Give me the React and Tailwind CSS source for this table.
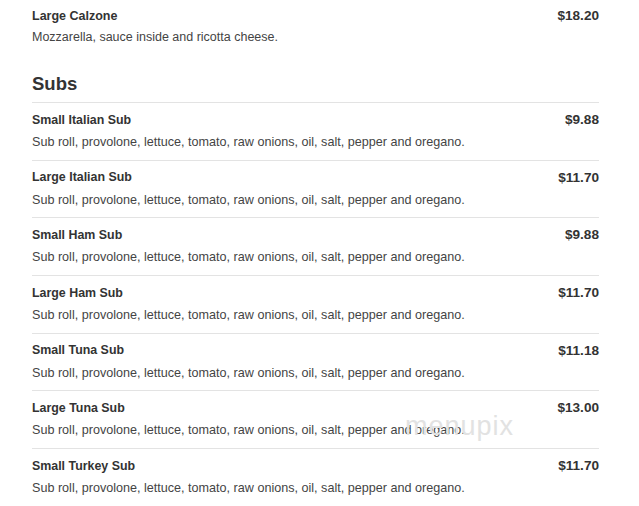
const SUB_DESC = "Sub roll, provolone, lettuce, tomato, raw onions, oil, salt, pepper and oregano.";

const subs = [
  { name: "Small Italian Sub", price: "$9.88" },
  { name: "Large Italian Sub", price: "$11.70" },
  { name: "Small Ham Sub", price: "$9.88" },
  { name: "Large Ham Sub", price: "$11.70" },
  { name: "Small Tuna Sub", price: "$11.18" },
  { name: "Large Tuna Sub", price: "$13.00" },
  { name: "Small Turkey Sub", price: "$11.70" },
];

function Item({ name, price, desc }) {
  return (
    <div className="border-t border-[#e3e3e3] pt-[7px] pb-[7.7px]">
      <div className="flex items-center justify-between h-[20px]">
        <span className="text-[12.4px] font-bold text-[#333]">{name}</span>
        <span className="text-[13.6px] font-bold text-[#333]">{price}</span>
      </div>
      <div className="mt-[2px] h-[20px] leading-[20px] text-[12.6px] text-[#444]">{desc}</div>
    </div>
  );
}

export default function App() {
  return (
    <div className="relative w-[639px] h-[506px] bg-white overflow-hidden" style={{ fontFamily: '"Liberation Sans", Arial, sans-serif' }}>
      <div className="w-[567px] ml-[32px]">
        {/* calzone tail of previous section */}
        <div className="pt-[6px]">
          <div className="flex items-center justify-between h-[20px]">
            <span className="text-[12.5px] font-bold text-[#333]">Large Calzone</span>
            <span className="text-[13.6px] font-bold text-[#333]">$18.20</span>
          </div>
          <div className="mt-px h-[20px] leading-[20px] text-[12.5px] text-[#444]">
            Mozzarella, sauce inside and ricotta cheese.
          </div>
        </div>

        <h2 className="mt-[25px] mb-[6px] h-[24px] leading-[24px] text-[18.5px] font-bold text-[#333]">Subs</h2>

        <div>
          {subs.map((s) => (
            <Item key={s.name} name={s.name} price={s.price} desc={SUB_DESC} />
          ))}
        </div>
      </div>

      {/* watermark */}
      <div className="absolute left-[405px] top-[406px] text-[27px] font-light tracking-[1px] text-[#e2e2e2] pointer-events-none">
        menupix
      </div>
    </div>
  );
}
